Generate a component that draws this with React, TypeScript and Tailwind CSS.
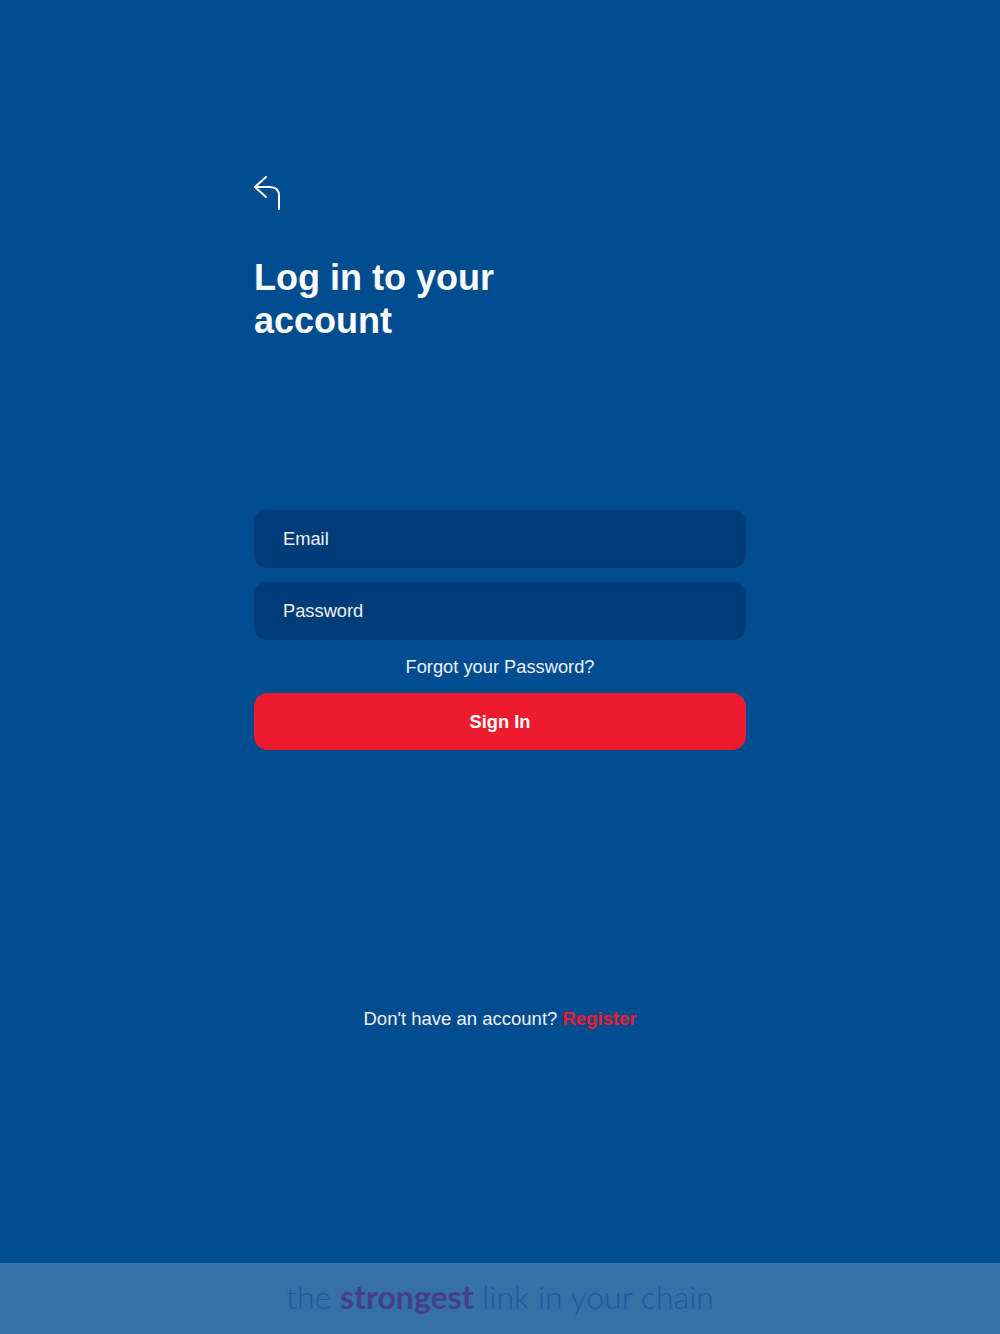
import React from 'react';

function BackArrow() {
  return (
    <svg width="30" height="36" viewBox="0 0 30 36" fill="none" stroke="white" strokeWidth="2" strokeLinecap="round" strokeLinejoin="round">
      <path d="M13 2 L2 12 L13 22" />
      <path d="M2 12 H17 Q26 12 26 21 V34" />
    </svg>
  );
}

export default function App() {
  return (
    <div className="min-h-[1334px] flex flex-col bg-[#004c91]" style={{ fontFamily: '"Liberation Sans", Arial, sans-serif' }}>
      <main className="flex-1">
        <div className="w-[492px] mx-auto pt-[175px] flex flex-col">
          <button className="w-[30px] h-[36px] -ml-[1px]">
            <BackArrow />
          </button>

          <h1 className="mt-[45px] text-[36px] leading-[43px] font-bold text-white">
            Log in to your
            <br />
            account
          </h1>

          {/* Form */}
          <div className="mt-[168px] flex flex-col gap-[14px]">
            <div className="h-[58px] rounded-[14px] bg-[#003c78] flex items-center px-[29px] text-[18.3px] text-[#eef2f7]">
              Email
            </div>
            <div className="h-[58px] rounded-[14px] bg-[#003c78] flex items-center px-[29px] text-[18.3px] text-[#eef2f7]">
              Password
            </div>
          </div>

          <div className="h-[53px] flex items-center justify-center text-[18.3px] text-[#eef2f7]">
            Forgot your Password?
          </div>

          <button className="h-[57px] rounded-[14px] bg-[#ee1b2e] text-white font-bold text-[18.3px]">
            Sign In
          </button>

          <p className="mt-[257px] text-center text-[18.5px] leading-[24px] text-[#eef2f7]">
            Don't have an account? <span className="font-bold text-[#ee1b2e]">Register</span>
          </p>
        </div>
      </main>

      <footer className="h-[71px] bg-[#3570a8] flex items-center justify-center pb-[4px]">
        <p className="text-[32px] leading-[40px] text-[#1c5a9e] font-light" style={{ fontFamily: 'Lato, "Open Sans", sans-serif' }}>
          the <span className="font-bold text-[#443f86]">strongest</span> link in your chain
        </p>
      </footer>
    </div>
  );
}
